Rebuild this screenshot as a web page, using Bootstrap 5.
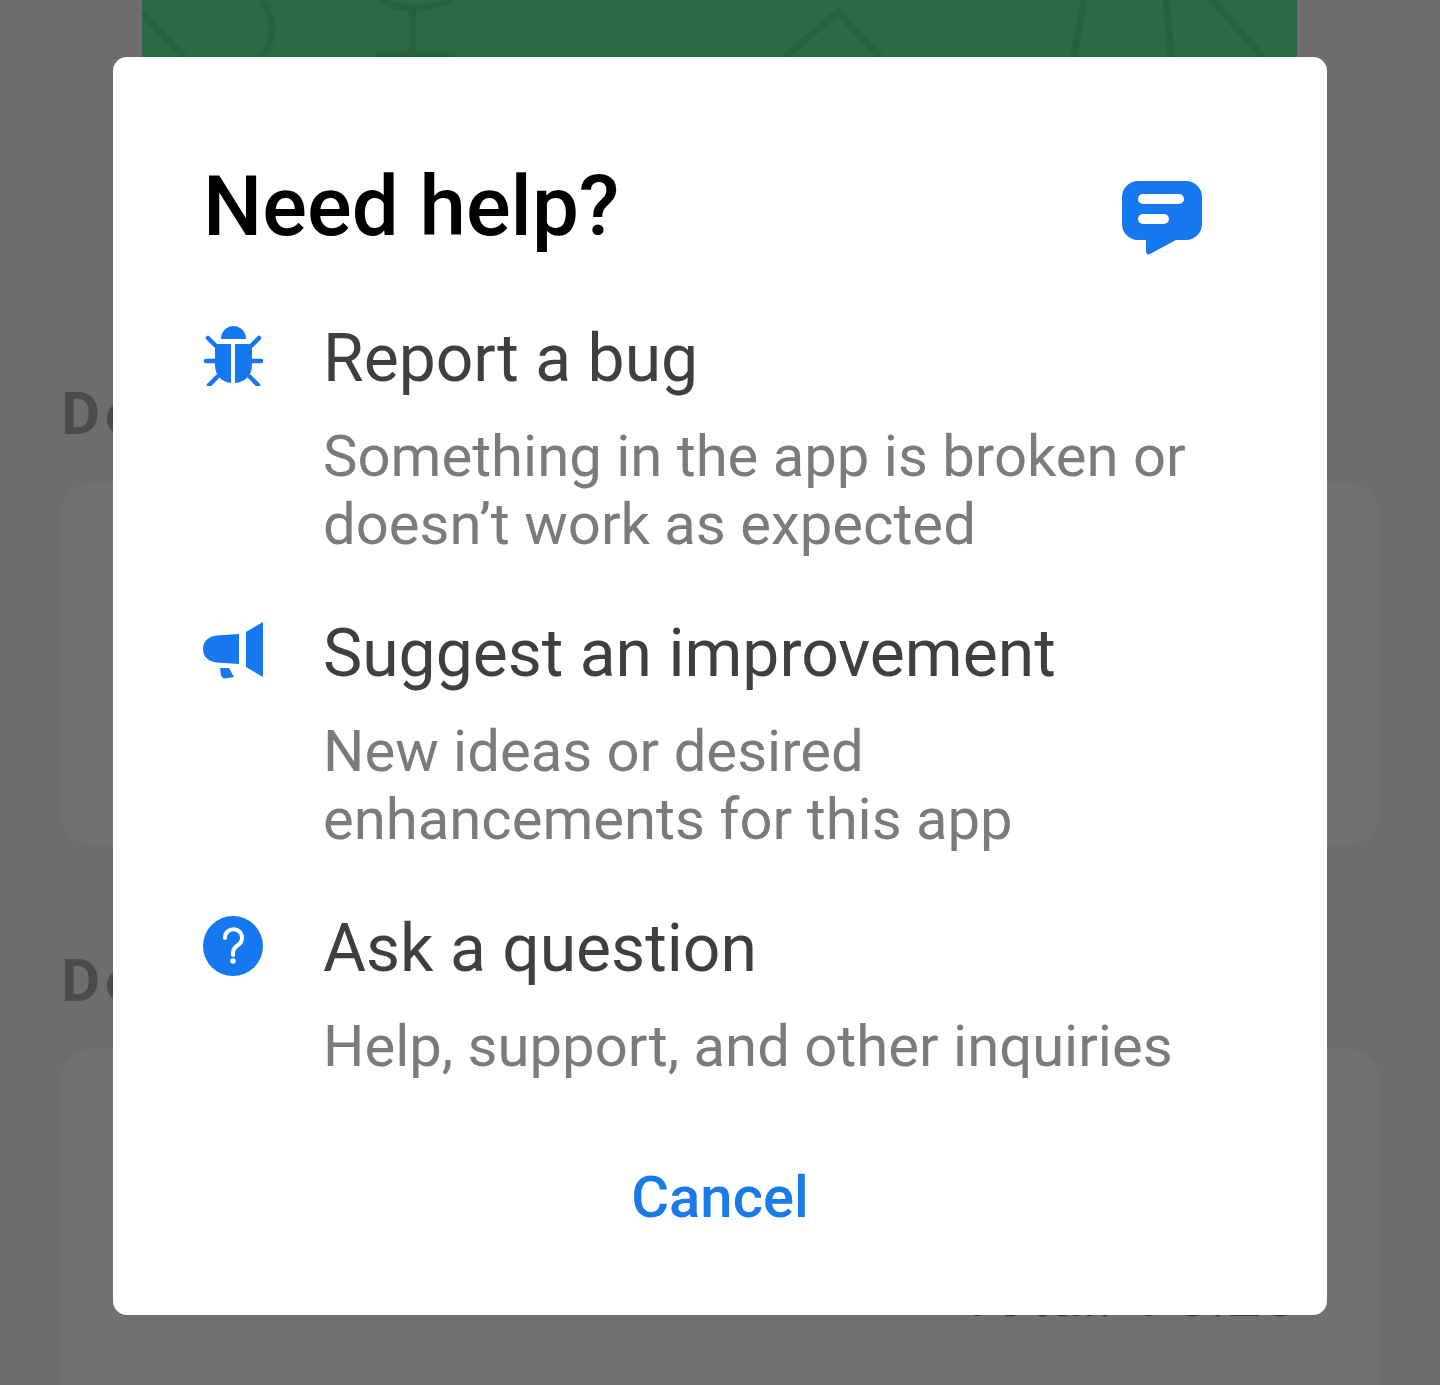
<!DOCTYPE html>
<html>

<head>
    <meta charset="UTF-8">
    <title>Need help?</title>
    <link rel="stylesheet" href="https://cdn.jsdelivr.net/npm/bootstrap@5.3.0/dist/css/bootstrap.min.css">
    <style>
        body {
            background: #6d6d6d;
            font-family: Roboto, "Liberation Sans", sans-serif;
            height: 1385px;
            overflow: hidden;
        }

        /* page behind the dialog */
        .back-page {
            height: 1385px;
            overflow: hidden;
            padding: 0 60px;
        }

        .hero-strip {
            background: #2a6a45;
            height: 300px;
            margin: 0 83px 0 82px;
        }

        .hero-strip svg {
            display: block;
        }

        .back-title {
            color: #4b4b4b;
            font-size: 60px;
            font-weight: 700;
            letter-spacing: 5px;
            line-height: 60px;
            margin: 84px 0 0 0;
            padding-left: 1px;
        }

        .back-card {
            background: #717171;
            border-radius: 34px;
            height: 364px;
            margin-top: 38px;
        }

        .back-card-last {
            height: 400px;
            padding: 212px 84px 0 0;
            text-align: right;
            color: #3c3c3c;
            font-size: 62px;
            line-height: 70px;
        }

        .back-gap {
            margin-top: 105px;
        }

        .back-gap + .back-card {
            margin-top: 37px;
        }

        /* dialog */
        .help-overlay {
            padding-top: 57px;
        }

        .help-dialog {
            width: 1214px;
            height: 1258px;
            background: #fff;
            border-radius: 14px;
            padding: 100px 124px 84px 90px;
        }

        .help-head {
            height: 96px;
            margin-bottom: 67px;
        }

        .help-title {
            color: #000;
            font-size: 83.500px;
            font-weight: 500;
            line-height: 96px;
            margin: 2px 0 0 0;
        }

        .head-icon {
            margin-top: 23px;
        }

        .help-row {
            margin-bottom: 57px;
        }

        .row-icon {
            width: 60px;
            margin-right: 62px;
            flex-shrink: 0;
        }

        .row-icon svg {
            display: block;
        }

        .row-title {
            color: #3f3f3f;
            font-size: 66px;
            line-height: 75px;
            margin-left: -2px;
            padding-top: 1px;
        }

        .row-desc {
            color: #7b7b7b;
            font-size: 58px;
            line-height: 68px;
            margin: 26px 0 0 -2px;
            white-space: nowrap;
        }

        .cancel-link {
            color: #1a7be8;
            font-size: 58px;
            font-weight: 500;
            line-height: 68px;
            margin-top: 26px;
            margin-left: -90px;
            margin-right: -124px;
            text-decoration: none;
        }
    </style>
</head>

<body>
    <!-- 뒤쪽 화면 -->
    <div class="back-page">
        <div class="hero-strip">
            <svg width="1155" height="57" viewBox="0 0 1155 57" fill="none" stroke="#276240" stroke-width="7">
                <path d="M0 13 L42 57" />
                <path d="M120 0 Q140 28 120 57" />
                <path d="M239 0 Q271 16 308 0 M271 8 V54 M234 55 H313" />
                <path d="M643 57 L696 12 L738 57" />
                <path d="M942 0 L932 57 M1024 0 L1029 57 M1070 0 L1121 57" />
            </svg>
        </div>
        <h2 class="back-title">Delivery</h2>
        <div class="back-card"></div>
        <h2 class="back-title back-gap">Details</h2>
        <div class="back-card back-card-last">Total: ₹ 8.25</div>
    </div>

    <!-- 도움말 대화상자 -->
    <div class="help-overlay position-absolute top-0 start-0 w-100 h-100 d-flex justify-content-center align-items-start">
        <div class="help-dialog d-flex flex-column">
            <div class="help-head d-flex justify-content-between align-items-start">
                <h1 class="help-title">Need help?</h1>
                <svg class="head-icon" width="82" height="75" viewBox="0 0 82 75">
                    <path fill="#1678f0" d="M17 1H65a16 16 0 0 1 16 16V44a16 16 0 0 1-16 16H55L29 74c-2 1-4 0-4-3V60H17A16 16 0 0 1 1 44V17A16 16 0 0 1 17 1Z" />
                    <rect x="17" y="14" width="46" height="10" rx="5" fill="#fff" />
                    <rect x="17" y="34" width="31" height="10" rx="5" fill="#fff" />
                </svg>
            </div>

            <div class="help-row d-flex">
                <div class="row-icon">
                    <svg width="60" height="62" viewBox="13 13 60 62" style="margin-top:4px">
                        <path fill="#1678f0" d="M31 28a12.500 13 0 0 1 25 0Z" />
                        <path fill="#1678f0" d="M25 33H41V72C32 71 25 65 25 54ZM45 33H62V54C62 65 55 71 45 72Z" />
                        <path stroke="#1678f0" stroke-width="4.500" stroke-linecap="round" fill="none" d="M18 27L26 35M69 27L61 35M16 50H26M71 50H61M19 74L27 66M68 74L60 66" />
                    </svg>
                </div>
                <div>
                    <div class="row-title">Report a bug</div>
                    <div class="row-desc">Something in the app is broken or<br>doesn’t work as expected</div>
                </div>
            </div>

            <div class="help-row d-flex">
                <div class="row-icon">
                    <svg width="60" height="58" viewBox="13 12 60 58" style="margin-top:6px">
                        <path fill="#1678f0" d="M49 25V55L27 53.500C19 53 13 48 13 40S19 27 27 26.500ZM56 23L73 13V68L56 58ZM30 59H39L44 68L35 69.500C33 69.500 31.500 68 31 66Z" />
                    </svg>
                </div>
                <div>
                    <div class="row-title">Suggest an improvement</div>
                    <div class="row-desc">New ideas or desired<br>enhancements for this app</div>
                </div>
            </div>

            <div class="help-row d-flex">
                <div class="row-icon">
                    <svg width="60" height="60" viewBox="0 0 60 60" style="margin-top:6px">
                        <circle cx="30" cy="30" r="30" fill="#1678f0" />
                        <path stroke="#fff" stroke-width="4" stroke-linecap="round" fill="none" d="M22 22a8.500 8.500 0 1 1 13 7c-3 2-5 4-5 8v2" />
                        <circle cx="30" cy="45" r="2.800" fill="#fff" />
                    </svg>
                </div>
                <div>
                    <div class="row-title">Ask a question</div>
                    <div class="row-desc">Help, support, and other inquiries</div>
                </div>
            </div>

            <a class="cancel-link text-center" href="#">Cancel</a>
        </div>
    </div>

    <script src="https://cdn.jsdelivr.net/npm/bootstrap@5.3.0/dist/js/bootstrap.bundle.min.js"></script>
</body>

</html>
